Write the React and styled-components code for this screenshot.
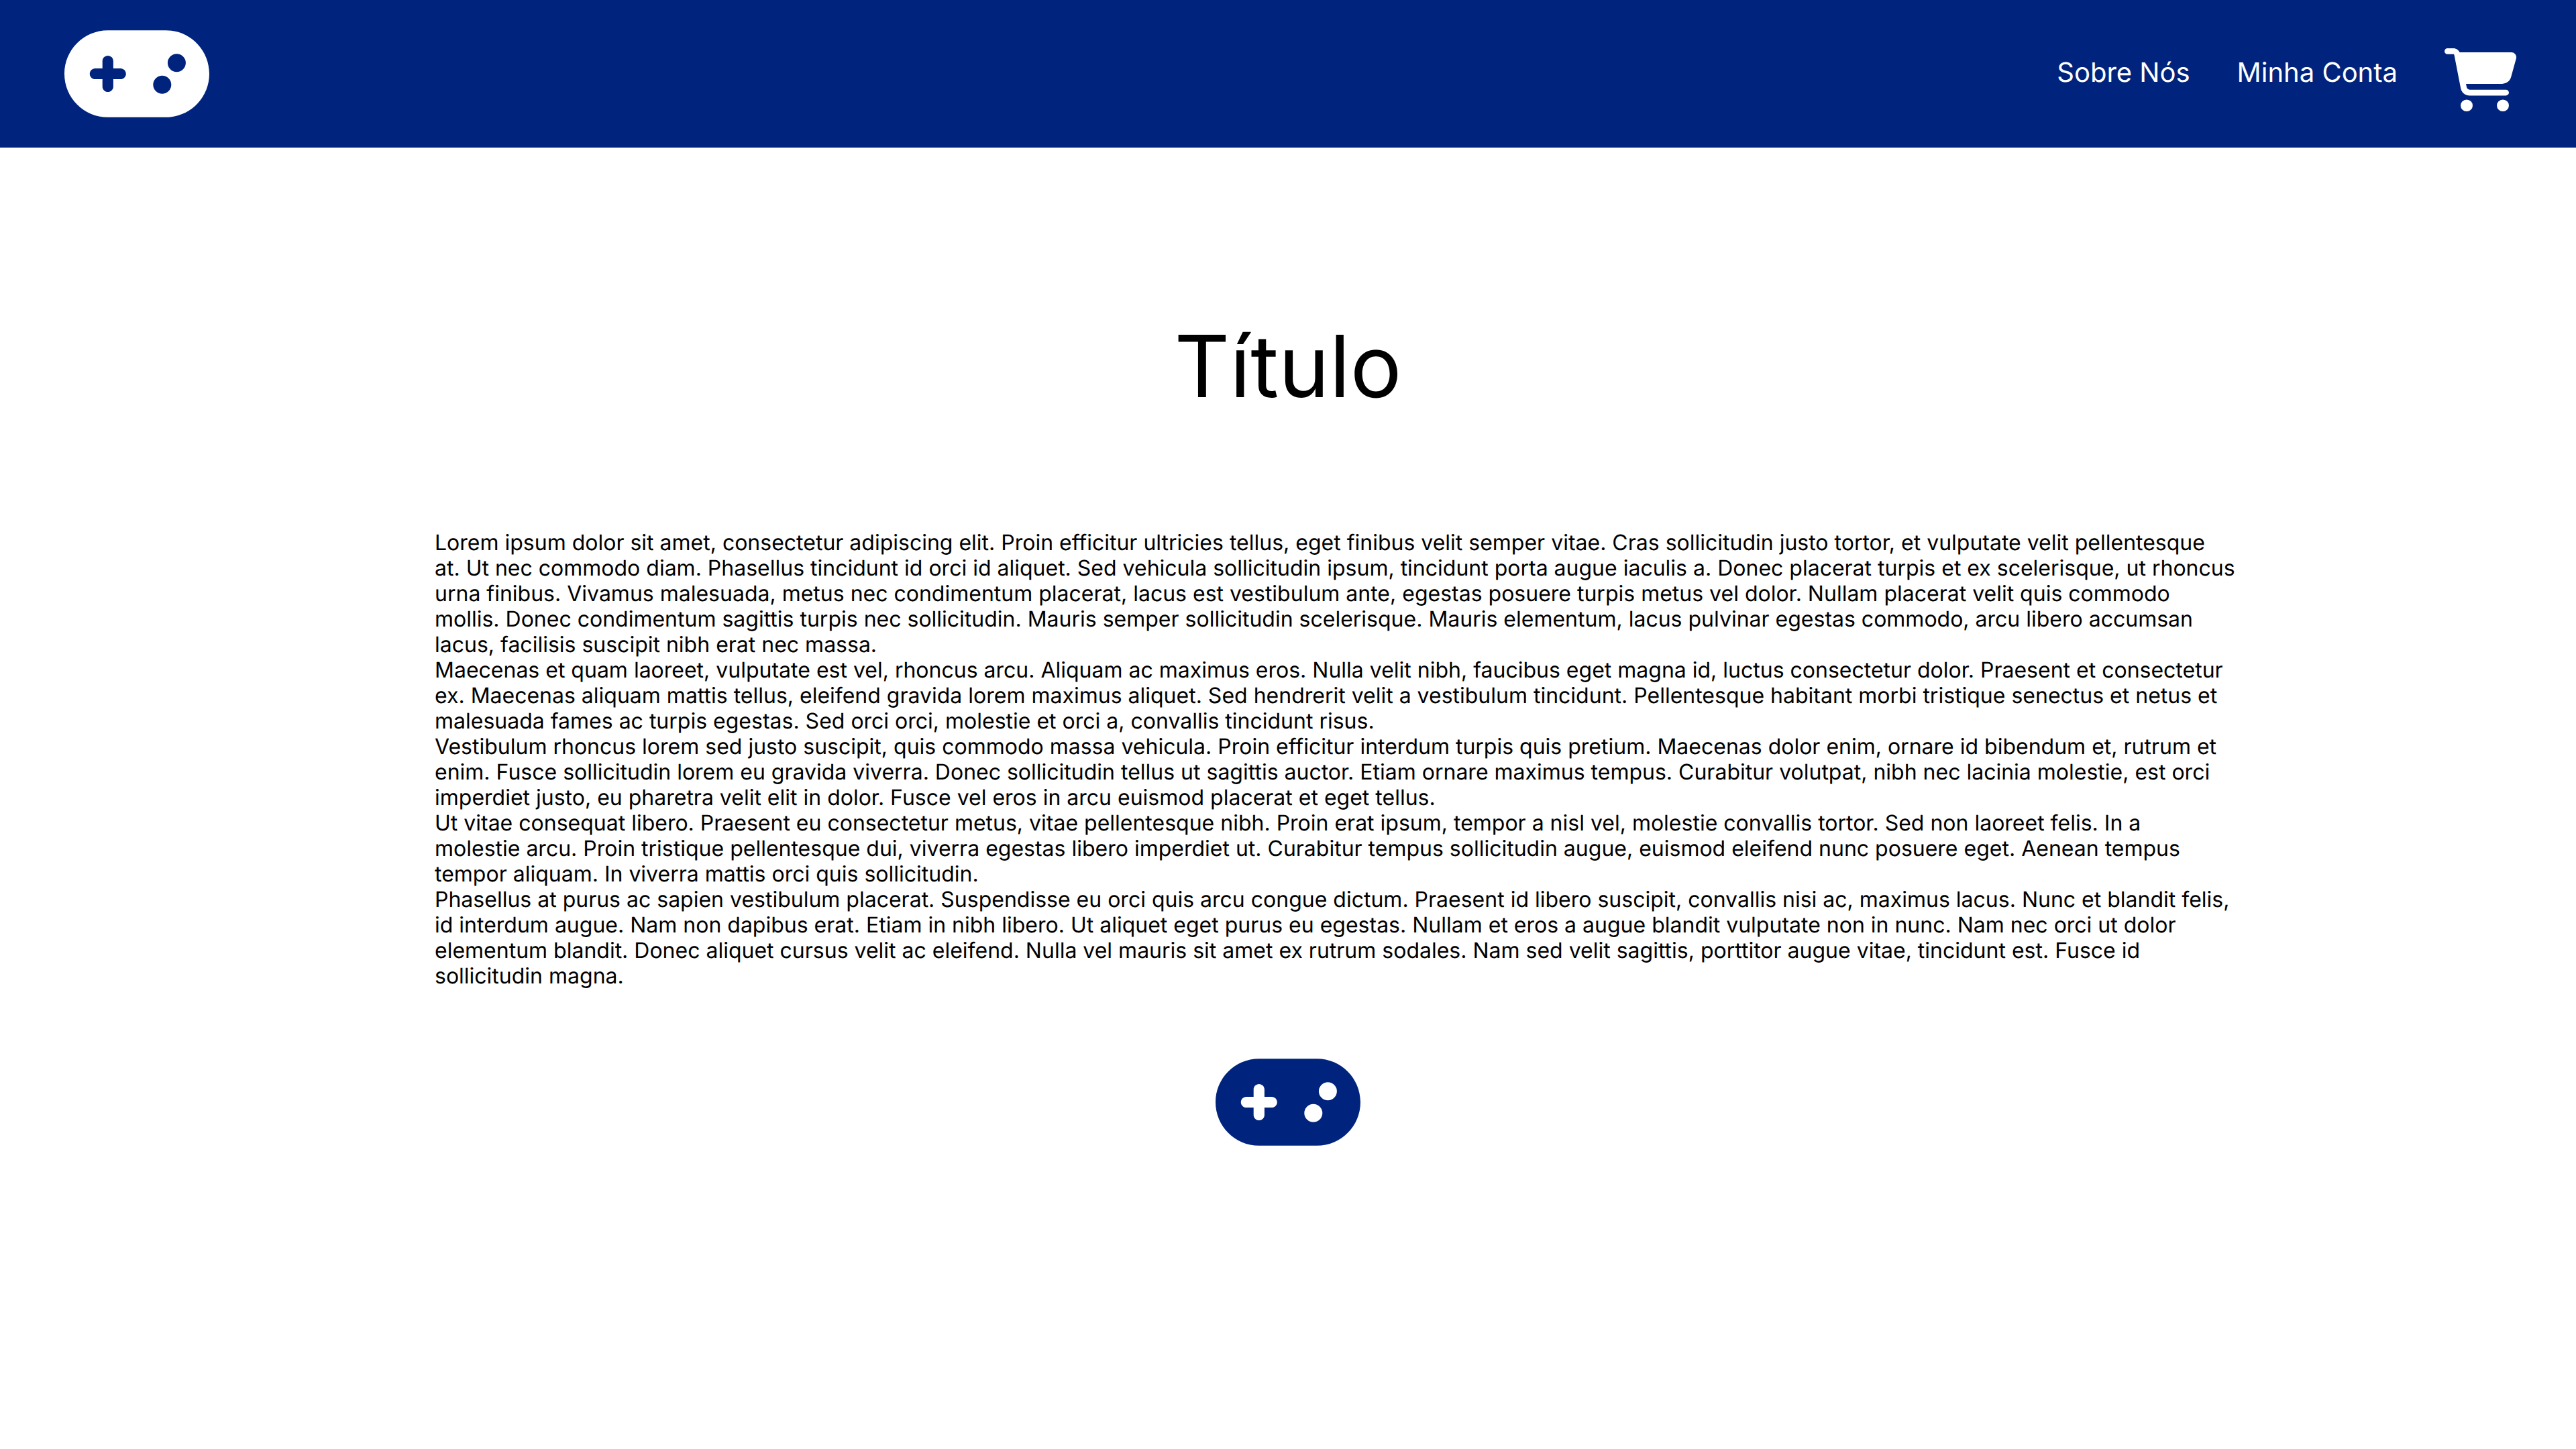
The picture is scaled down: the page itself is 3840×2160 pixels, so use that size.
import React from "react";
import styled, { createGlobalStyle } from "styled-components";
import { FaCartShopping, FaGamepad } from "react-icons/fa6";

const NAVY = "#00247d";

const GlobalStyle = createGlobalStyle`
  * {
    box-sizing: border-box;
  }

  body {
    margin: 0;
    background: #ffffff;
    color: #000000;
    font-family: Inter, "Liberation Sans", sans-serif;
    text-rendering: geometricPrecision;
  }
`;

const Header = styled.header`
  display: flex;
  align-items: center;
  justify-content: space-between;
  height: 220px;
  padding: 0 88px 0 96px;
  background: ${NAVY};
  color: #ffffff;
`;

const LogoLink = styled.a`
  display: flex;
  color: ${({ $color }) => $color};
`;

const LogoIcon = styled(FaGamepad)`
  width: 216px;
  height: 174px;
`;

const Nav = styled.nav`
  display: flex;
  align-items: center;
`;

const NavLink = styled.a`
  margin-right: 70px;
  padding-bottom: 4px;
  color: inherit;
  font-size: 40px;
  line-height: 48px;
  text-decoration: none;
`;

const CartButton = styled.button`
  display: flex;
  padding: 18px 0 0;
  border: 0;
  background: none;
  color: inherit;
  cursor: pointer;
`;

const CartIcon = styled(FaCartShopping)`
  width: 108px;
  height: 94px;
`;

const Main = styled.main`
  padding-top: 248px;
`;

const Title = styled.h1`
  margin: 0;
  font-size: 128px;
  font-weight: 400;
  line-height: 156px;
  text-align: center;
`;

const Article = styled.article`
  margin: 166px 504px 82px 648px;
  font-size: 32px;
  line-height: 38px;
`;

const Paragraph = styled.p`
  margin: 0;
  white-space: pre-line;
`;

const Footer = styled.footer`
  display: flex;
  justify-content: center;
`;

const paragraphs = [
  "Lorem ipsum dolor sit amet, consectetur adipiscing elit. Proin efficitur ultricies tellus, eget finibus velit semper vitae. Cras sollicitudin justo tortor, et vulputate velit pellentesque\nat. Ut nec commodo diam. Phasellus tincidunt id orci id aliquet. Sed vehicula sollicitudin ipsum, tincidunt porta augue iaculis a. Donec placerat turpis et ex scelerisque, ut rhoncus urna finibus. Vivamus malesuada, metus nec condimentum placerat, lacus est vestibulum ante, egestas posuere turpis metus vel dolor. Nullam placerat velit quis commodo mollis. Donec condimentum sagittis turpis nec sollicitudin. Mauris semper sollicitudin scelerisque. Mauris elementum, lacus pulvinar egestas commodo, arcu libero accumsan lacus, facilisis suscipit nibh erat nec massa.",
  "Maecenas et quam laoreet, vulputate est vel, rhoncus arcu. Aliquam ac maximus eros. Nulla velit nibh, faucibus eget magna id, luctus consectetur dolor. Praesent et consectetur ex. Maecenas aliquam mattis tellus, eleifend gravida lorem maximus aliquet. Sed hendrerit velit a vestibulum tincidunt. Pellentesque habitant morbi tristique senectus et netus et malesuada fames ac turpis egestas. Sed orci orci, molestie et orci a, convallis tincidunt risus.",
  "Vestibulum rhoncus lorem sed justo suscipit, quis commodo massa vehicula. Proin efficitur interdum turpis quis pretium. Maecenas dolor enim, ornare id bibendum et, rutrum et enim. Fusce sollicitudin lorem eu gravida viverra. Donec sollicitudin tellus ut sagittis auctor. Etiam ornare maximus tempus. Curabitur volutpat, nibh nec lacinia molestie, est orci imperdiet justo, eu pharetra velit elit in dolor. Fusce vel eros in arcu euismod placerat et eget tellus.",
  "Ut vitae consequat libero. Praesent eu consectetur metus, vitae pellentesque nibh. Proin erat ipsum, tempor a nisl vel, molestie convallis tortor. Sed non laoreet felis. In a\nmolestie arcu. Proin tristique pellentesque dui, viverra egestas libero imperdiet ut. Curabitur tempus sollicitudin augue, euismod eleifend nunc posuere eget. Aenean tempus tempor aliquam. In viverra mattis orci quis sollicitudin.",
  "Phasellus at purus ac sapien vestibulum placerat. Suspendisse eu orci quis arcu congue dictum. Praesent id libero suscipit, convallis nisi ac, maximus lacus. Nunc et blandit felis, id interdum augue. Nam non dapibus erat. Etiam in nibh libero. Ut aliquet eget purus eu egestas. Nullam et eros a augue blandit vulputate non in nunc. Nam nec orci ut dolor elementum blandit. Donec aliquet cursus velit ac eleifend. Nulla vel mauris sit amet ex rutrum sodales. Nam sed velit sagittis, porttitor augue vitae, tincidunt est. Fusce id sollicitudin magna.",
];

export default function App() {
  return (
    <>
      <GlobalStyle />
      <Header>
        <LogoLink href="#" $color="#ffffff" aria-label="Início">
          <LogoIcon aria-hidden="true" />
        </LogoLink>
        <Nav>
          <NavLink href="#sobre">Sobre Nós</NavLink>
          <NavLink href="#conta">Minha Conta</NavLink>
          <CartButton type="button" aria-label="Carrinho">
            <CartIcon preserveAspectRatio="none" aria-hidden="true" />
          </CartButton>
        </Nav>
      </Header>
      <Main>
        <Title>Título</Title>
        <Article>
          {paragraphs.map((text) => (
            <Paragraph key={text}>{text}</Paragraph>
          ))}
        </Article>
      </Main>
      <Footer>
        <LogoLink href="#" $color={NAVY} aria-label="Voltar ao início">
          <LogoIcon aria-hidden="true" />
        </LogoLink>
      </Footer>
    </>
  );
}
